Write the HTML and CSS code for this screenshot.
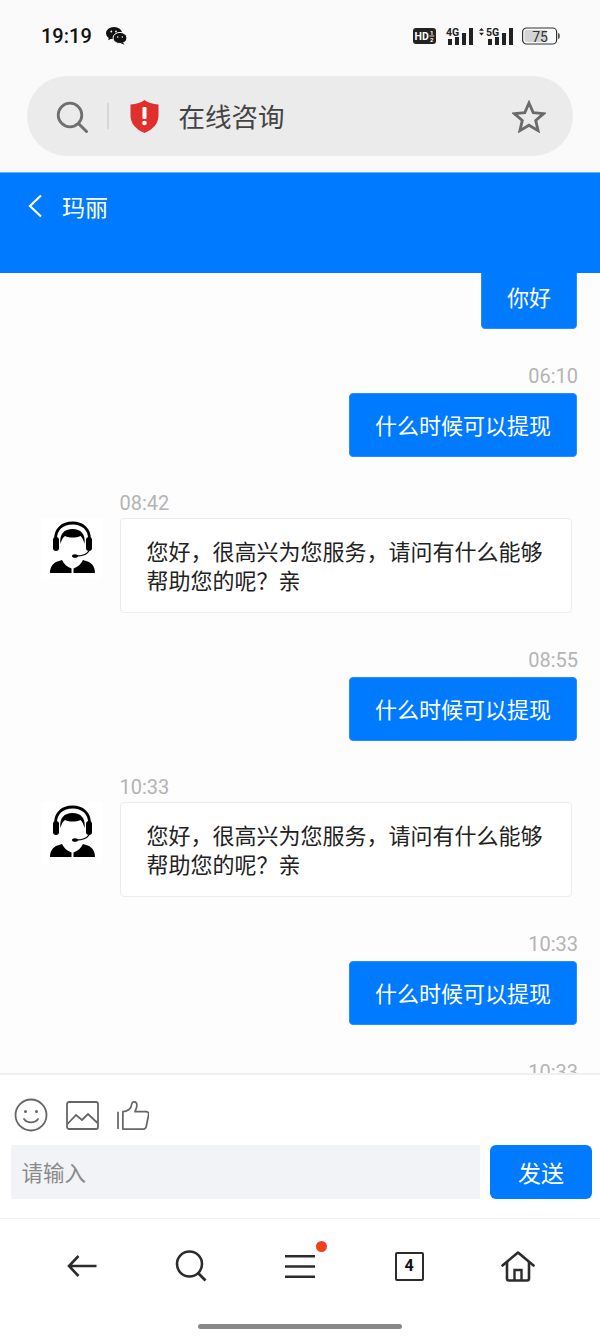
FILE: index.html
```html
<!DOCTYPE html>
<html lang="zh">
<head>
<meta charset="utf-8">
<title>在线咨询</title>
<link rel="stylesheet" href="styles.css">
</head>
<body>
<svg class="defs" width="0" height="0" aria-hidden="true">
  <symbol id="agent" viewBox="0 0 61 61">
    <path d="M9 55c0-7 4-11 9-12l3-1c2 4 5 7 9.500 8.500V55zM54 55c0-7-4-11-9-12l-3-1c-2 4-5 7-9.500 8.500V55z" fill="#000"/>
    <path d="M19.500 26c-1.500-10 4-15 12-15s13.500 5 12 15c-1-3.500-2-6.500-4-8-5 2-11 2-15.500 0-2.500 1.500-3.500 4.500-4.500 8z" fill="#000"/>
    <path d="M14.500 21c0-10 7-16 17-16s17 6 17 16" fill="none" stroke="#000" stroke-width="2.800"/>
    <rect x="12" y="19" width="6" height="14" rx="3" fill="#000"/>
    <rect x="45" y="19" width="6" height="14" rx="3" fill="#000"/>
    <path d="M48 33c-2 3-7 5-13 5" fill="none" stroke="#000" stroke-width="1.300"/>
    <ellipse cx="34" cy="38" rx="3" ry="1.800" fill="#000"/>
  </symbol>
</svg>

<header class="top">
  <div class="status">
    <div class="status-left">
      <span class="clock">19:19</span>
      <svg class="wechat" width="21" height="18" viewBox="0 0 21 18">
        <path d="M3 9 2.300 13.300 6.500 11z" fill="#111"/>
        <ellipse cx="8" cy="6.200" rx="8" ry="6.200" fill="#111"/>
        <ellipse cx="14" cy="11" rx="7" ry="5.600" fill="#111" stroke="#fafafa" stroke-width="1"/>
        <path d="M17 15.500l1.500 2.300-3.800-1.500z" fill="#111"/>
        <circle cx="5.300" cy="4.500" r=".9" fill="#fafafa"/><circle cx="10" cy="4.500" r=".9" fill="#fafafa"/>
        <circle cx="11.700" cy="10" r=".8" fill="#fafafa"/><circle cx="16.300" cy="10" r=".8" fill="#fafafa"/>
      </svg>
    </div>
    <div class="status-right">
      <svg width="23" height="16" viewBox="0 0 23 16">
        <rect width="23" height="16" rx="3" fill="#222"/>
        <text x="1.500" y="12" class="hd">HD</text>
        <text x="18.800" y="7" class="half">1</text>
        <rect x="16.300" y="7.600" width="5" height=".8" fill="#fff"/>
        <text x="18.800" y="14" class="half">2</text>
      </svg>
      <svg class="sig4" width="27" height="18" viewBox="0 0 27 18">
        <text x="0" y="8.500" class="net">4G</text>
        <rect x="2" y="12" width="4" height="6" fill="#222"/><rect x="9" y="10" width="4" height="8" fill="#222"/><rect x="16" y="6" width="4" height="12" fill="#222"/><rect x="23" y="1" width="4" height="17" fill="#222"/>
      </svg>
      <svg class="sig5" width="34" height="18" viewBox="0 0 34 18">
        <path d="M2.500 1 5 3.800H0zM2.500 8.500 5 5.700H0z" fill="#222"/>
        <text x="7" y="8.500" class="net">5G</text>
        <rect x="9" y="12" width="4" height="6" fill="#222"/><rect x="16" y="10" width="4" height="8" fill="#222"/><rect x="23" y="6" width="4" height="12" fill="#222"/><rect x="30" y="1" width="4" height="17" fill="#222"/>
      </svg>
      <svg class="batt" width="38" height="18" viewBox="0 0 38 18">
        <rect x=".6" y="1" width="34" height="16" rx="4" fill="#fafafa" stroke="#333" stroke-width="1.200"/>
        <rect x="2.500" y="3" width="22" height="12" rx="2" fill="#d4d4d4"/>
        <path d="M36 6c1.200 0 1.800 1 1.800 3s-.6 3-1.800 3z" fill="#555"/>
        <text x="18" y="14.500" class="level">75</text>
      </svg>
    </div>
  </div>
  <div class="url">
    <svg width="34" height="34" viewBox="0 0 34 34"><circle cx="16" cy="16" r="11.800" fill="none" stroke="#6f6f6f" stroke-width="2.800"/><path d="M25 25 32.500 32.500" stroke="#6f6f6f" stroke-width="3" stroke-linecap="round"/></svg>
    <span class="url-sep"></span>
    <svg class="shield" width="29" height="33" viewBox="0 0 29 33">
      <path d="M14.500 0c3 2.400 8 4 14 4.500v11c0 8-5.500 14-14 17.500C6 29.500.5 23.500.5 15.500v-11C6.500 4 11.500 2.400 14.500 0z" fill="#e0302e"/>
      <rect x="12.500" y="7" width="4" height="12" rx="1.200" fill="#fff"/><circle cx="14.500" cy="23" r="2.300" fill="#fff"/>
    </svg>
    <span class="url-text">在线咨询</span>
    <svg class="star" width="34" height="33" viewBox="0 0 34 33"><path d="M17 3l4.200 9.600 10.400 1-7.900 6.800 2.400 10.200-9.100-5.400-9.100 5.400 2.400-10.200L2.400 13.600l10.400-1z" fill="none" stroke="#6a6a6a" stroke-width="2.800" stroke-linejoin="miter"/></svg>
  </div>
</header>

<div class="bar">
  <svg class="bar-back" width="16" height="24" viewBox="0 0 16 24"><path d="M14 1.500 3 12l11 10.500" fill="none" stroke="#fff" stroke-width="2.200"/></svg>
  <span class="bar-title">玛丽</span>
</div>

<main class="chat">
  <div class="list">
    <div class="me first"><div class="bubble blue">你好</div></div>
    <div class="me"><div class="time">06:10</div><div class="bubble blue">什么时候可以提现</div></div>
    <div class="you">
      <svg class="avatar"><use href="#agent"/></svg>
      <div class="you-body"><div class="time">08:42</div><div class="bubble white">您好，很高兴为您服务，请问有什么能够帮助您的呢？亲</div></div>
    </div>
    <div class="me"><div class="time">08:55</div><div class="bubble blue">什么时候可以提现</div></div>
    <div class="you">
      <svg class="avatar"><use href="#agent"/></svg>
      <div class="you-body"><div class="time">10:33</div><div class="bubble white">您好，很高兴为您服务，请问有什么能够帮助您的呢？亲</div></div>
    </div>
    <div class="me"><div class="time">10:33</div><div class="bubble blue">什么时候可以提现</div></div>
    <div class="me"><div class="time">10:33</div></div>
  </div>
</main>

<section class="composer">
  <div class="tools">
    <svg width="34" height="34" viewBox="0 0 34 34"><circle cx="17" cy="17" r="15.500" fill="none" stroke="#666" stroke-width="1.800"/><circle cx="11.500" cy="13.500" r="1.500" fill="#666"/><circle cx="22.500" cy="13.500" r="1.500" fill="#666"/><path d="M10 21c3 4.500 11 4.500 14 0" fill="none" stroke="#666" stroke-width="1.800" stroke-linecap="round"/></svg>
    <svg width="33" height="29" viewBox="0 0 33 29"><rect x="1" y="1" width="31" height="27" rx="2" fill="none" stroke="#666" stroke-width="1.800"/><path d="M1.500 23 10 14l6 5 6-6 9.500 9" fill="none" stroke="#666" stroke-width="1.800"/></svg>
    <svg width="32" height="29" viewBox="0 0 33 30"><path d="M1 11v18" stroke="#666" stroke-width="1.800"/><path d="M6 29V11c4 0 9-3 9-7 0-3 3-4 4.500-2.500 2 2 .5 6.500-1 9.500h11.500c2 0 3 1.500 2.600 3.500l-2.400 12c-.3 1.500-1.400 2.500-3 2.500z" fill="none" stroke="#666" stroke-width="1.800" stroke-linejoin="round"/></svg>
  </div>
  <div class="send-row">
    <div class="input">请输入</div>
    <div class="send">发送</div>
  </div>
</section>

<nav class="nav">
  <svg width="30" height="24" viewBox="0 0 30 24"><path d="M29.500 12H2.500M11.500 2 2 12l9.500 10" fill="none" stroke="#2c2c2c" stroke-width="2.600"/></svg>
  <svg width="32" height="32" viewBox="0 0 32 32"><circle cx="14.500" cy="14" r="12.500" fill="none" stroke="#2c2c2c" stroke-width="2.600"/><path d="M23 23 30.500 30.500" stroke="#2c2c2c" stroke-width="2.800"/></svg>
  <div class="menu">
    <span class="menu-dot"></span>
    <svg width="30" height="23" viewBox="0 0 30 23"><path d="M0 1.300h30M0 11.500h30M0 21.700h30" stroke="#2c2c2c" stroke-width="2.600"/></svg>
  </div>
  <div class="tabs">4</div>
  <svg width="34" height="31" viewBox="0 0 34 31"><path d="M1.500 14.500 17 1.500l15.500 13" fill="none" stroke="#2c2c2c" stroke-width="2.600" stroke-linejoin="round" stroke-linecap="round"/><path d="M6 11v16.500c0 1.500 1 2 2 2h18c1 0 2-.5 2-2V11" fill="none" stroke="#2c2c2c" stroke-width="2.600"/><path d="M13.500 29.500V19h7v10.500" fill="none" stroke="#2c2c2c" stroke-width="2.400"/></svg>
</nav>
<div class="home-wrap"><span class="home-bar"></span></div>
</body>
</html>
```
FILE: styles.css
```css
* { box-sizing: border-box; }
html, body { margin: 0; padding: 0; }
body {
  width: 600px;
  height: 1341px;
  overflow: hidden;
  display: flex;
  flex-direction: column;
  background: #fff;
  font-family: "Noto Sans CJK SC", "Roboto", sans-serif;
}
.defs { position: absolute; }

.top { height: 172px; background: #fafafa; flex: none; }
.status { height: 76px; padding: 0 40px 4px 41px; display: flex; justify-content: space-between; align-items: center; }
.status-left { display: flex; align-items: center; gap: 14px; }
.clock { font: 500 20px/24px Roboto, sans-serif; color: #111; }
.status-right { display: flex; align-items: center; }
.status-right svg { display: block; }
.sig4 { margin-left: 10px; }
.sig5 { margin-left: 6px; }
.batt { margin-left: 9px; }
.hd { font: 700 10.500px Roboto, sans-serif; fill: #fff; }
.half { font: 700 6px Roboto, sans-serif; fill: #fff; text-anchor: middle; }
.net { font: 700 10.500px Roboto, sans-serif; fill: #222; }
.level { font: 400 14px Roboto, sans-serif; fill: #333; text-anchor: middle; }

.url {
  height: 80px;
  margin: 0 27px;
  padding: 0 27px;
  background: #ebebeb;
  border-radius: 40px;
  display: flex;
  align-items: center;
}
.url-sep { width: 2px; height: 26px; background: #d6d6d6; margin: 0 21px 0 19px; }
.url-text { margin-left: 19.500px; font-size: 26.500px; line-height: 36px; color: #444; flex: 1; }

.bar {
  height: 101px;
  flex: none;
  background: #007aff;
  border-top: 1px solid #6db4f5;
  padding: 19px 0 0 27px;
  display: flex;
  align-items: flex-start;
  gap: 19px;
}
.bar-back { margin-top: 2px; }
.bar-title { color: #fff; font-size: 23px; line-height: 28px; }

.chat { height: 800px; flex: none; overflow: hidden; background: #fdfdfd; }
.list { margin-top: -8px; padding: 0 23px 0 41px; }
.me { margin-top: 34px; display: flex; flex-direction: column; align-items: flex-end; }
.me.first { margin-top: 0; }
.me .time { margin-top: 1px; margin-bottom: 4.500px; }
.you { margin-top: 33.500px; display: flex; align-items: flex-start; gap: 17.500px; }
.you .time { margin-top: 1px; margin-bottom: 3px; }
.you-body { flex: 1; min-width: 0; }
.avatar { width: 61px; height: 61px; flex: none; margin-top: 28px; background: #fff; }
.time { font: 400 20px/24px Roboto, sans-serif; color: #b4b4b4; margin-right: -1px; }
.bubble { font-size: 22px; line-height: 29px; border-radius: 4px; }
.blue { background: #007aff; color: #fff; padding: 16px 25px 17px; border: 1px solid #2a8dfb; }
.white { background: #fff; color: #222; padding: 17px 26px 18px; border: 1px solid #ececec; width: 452px; }

.composer { flex: 1; background: #fff; border-top: 2px solid #efefef; border-bottom: 1px solid #f0f0f0; padding: 0 8px 0 11px; }
.tools { height: 70px; padding: 10px 0 0 3px; display: flex; align-items: center; gap: 18px; }
.send-row { display: flex; gap: 10px; }
.input { flex: 1; height: 54px; background: #f2f3f7; padding-left: 10.500px; font-size: 21.500px; line-height: 54px; color: #8a8a8a; }
.send { width: 102px; height: 54px; background: #007aff; border-radius: 6px; color: #fff; font-size: 23px; line-height: 54px; text-align: center; }

.nav { height: 105px; flex: none; background: #fff; padding: 0 28px 11px 27.500px; display: grid; grid-template-columns: repeat(5, 109px); justify-items: center; align-items: center; }
.menu { position: relative; }
.menu svg { display: block; }
.menu-dot { position: absolute; top: -13.500px; right: -11.500px; width: 11px; height: 11px; border-radius: 50%; background: #f0411f; }
.tabs { width: 29px; height: 29px; border: 2.600px solid #2c2c2c; border-radius: 2px; font: 700 16px/24px Roboto, sans-serif; color: #111; text-align: center; }

.home-wrap { height: 17px; flex: none; background: #fff; display: flex; justify-content: center; }
.home-bar { width: 204px; height: 5px; border-radius: 3px; background: #888; }
```
